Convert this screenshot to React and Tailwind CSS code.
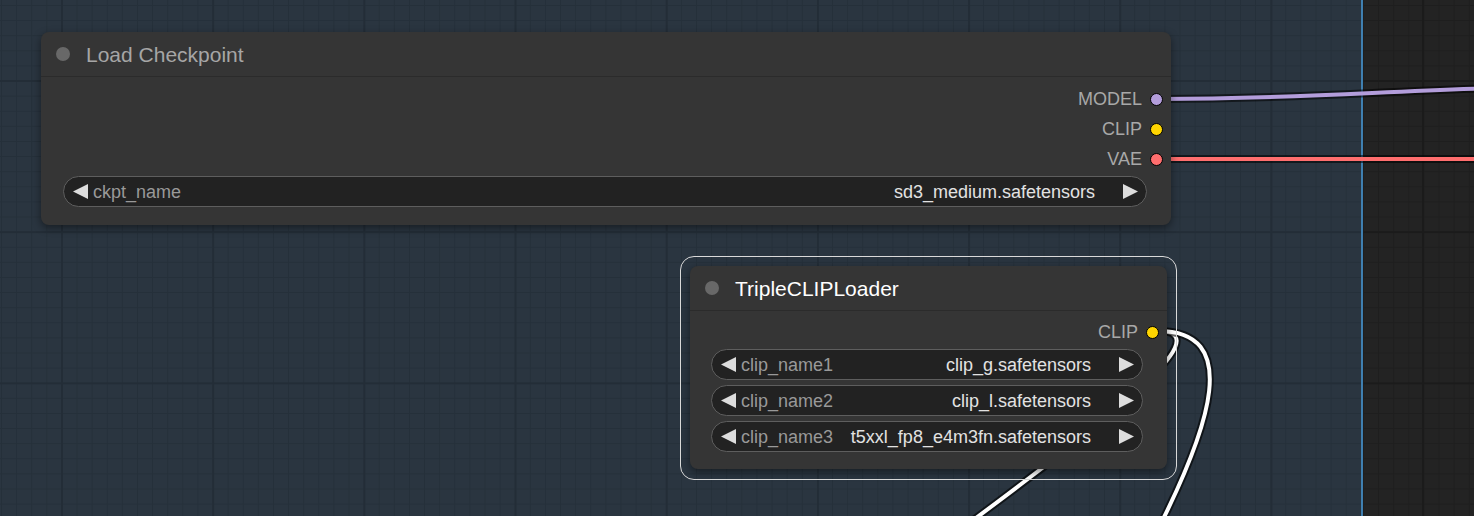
import React from "react";

const font = "font-['Liberation_Sans',Arial,sans-serif]";

function ArrowLeft() {
  return (
    <svg width="15" height="15" viewBox="0 0 15 15" className="shrink-0">
      <polygon points="0,7.5 15,0 15,15" fill="#dddddd" />
    </svg>
  );
}

function ArrowRight() {
  return (
    <svg width="15" height="15" viewBox="0 0 15 15" className="shrink-0">
      <polygon points="15,7.5 0,0 0,15" fill="#dddddd" />
    </svg>
  );
}

function Output({ label, color }) {
  return (
    <div className="h-[30px] flex items-center justify-end gap-[8px] pr-[8px]">
      <span className="text-[18px] text-[#a8a8a8] leading-[22px]">{label}</span>
      <span className={`w-[13px] h-[13px] rounded-full border border-black ${color}`} />
    </div>
  );
}

function Combo({ name, value }) {
  return (
    <div className="h-[31px] rounded-full border border-[#5e5e5e] bg-[#222222] flex items-center pl-[9px] pr-[8px]">
      <ArrowLeft />
      <span className="ml-[5px] text-[18px] text-[#999999] leading-[22px] whitespace-nowrap">{name}</span>
      <span className="flex-1 text-right text-[18px] text-[#e2e2e2] leading-[22px] whitespace-nowrap">{value}</span>
      <span className="ml-[28px]"><ArrowRight /></span>
    </div>
  );
}

function Title({ text, selected }) {
  return (
    <div className="h-[45px] flex items-center pl-[15px] gap-[16px] border-b border-[#2b2b2b]">
      <span className="w-[14px] h-[14px] rounded-full bg-[#686868]" />
      <span className={`text-[21px] leading-none ${selected ? "text-white" : "text-[#a6a6a6]"}`}>{text}</span>
    </div>
  );
}

export default function App() {
  return (
    <div
      className={`relative w-[1474px] h-[516px] overflow-hidden bg-[#2a3540] ${font} [background-image:linear-gradient(to_right,#232d37_2px,transparent_2px),linear-gradient(to_bottom,#232d37_2px,transparent_2px),linear-gradient(to_right,#25303a_1px,transparent_1px),linear-gradient(to_bottom,#25303a_1px,transparent_1px)] [background-size:151.2px_151.2px,151.2px_151.2px,15.12px_15.12px,15.12px_15.12px] [background-position:61px_80px,61px_80px,1px_5px,1px_5px]`}
    >
      {/* dark area on the right */}
      <div className="absolute left-[1361px] top-0 bottom-0 right-0 border-l-2 border-[#3f7fb0] bg-[#232323] [background-image:linear-gradient(to_right,#1b1b1b_2px,transparent_2px),linear-gradient(to_bottom,#1b1b1b_2px,transparent_2px),linear-gradient(to_right,#1e1e1e_1px,transparent_1px),linear-gradient(to_bottom,#1e1e1e_1px,transparent_1px)] [background-size:151.2px_151.2px,151.2px_151.2px,15.12px_15.12px,15.12px_15.12px] [background-position:59px_80px,59px_80px,0px_5px,0px_5px]" />

      {/* links */}
      <svg className="absolute inset-0" width="1474" height="516" viewBox="0 0 1474 516" fill="none">
        <g strokeLinecap="round">
          <path d="M1160 99 C1300 99 1380 91 1500 88" stroke="rgba(0,0,0,0.55)" strokeWidth="8" />
          <path d="M1160 99 C1300 99 1380 91 1500 88" stroke="#b39ddb" strokeWidth="4" />
          <path d="M1160 159 L1500 159" stroke="rgba(0,0,0,0.55)" strokeWidth="8" />
          <path d="M1160 159 L1500 159" stroke="#ff6e6e" strokeWidth="4" />
          <path d="M1158 331 C1230 331 1080 440 940 545" stroke="rgba(0,0,0,0.6)" strokeWidth="8" />
          <path d="M1158 331 C1230 331 1080 440 940 545" stroke="#ffffff" strokeWidth="4" />
          <path d="M1158 331 C1240 331 1215 420 1150 545" stroke="rgba(0,0,0,0.6)" strokeWidth="8" />
          <path d="M1158 331 C1240 331 1215 420 1150 545" stroke="#ffffff" strokeWidth="4" />
        </g>
      </svg>

      {/* Load Checkpoint */}
      <div className="absolute left-[41px] top-[32px] w-[1130px] h-[193px] rounded-[8px] bg-[#353535] shadow-[0_3px_8px_rgba(0,0,0,0.45)]">
        <Title text="Load Checkpoint" />
        <div className="pt-[7px]">
          <Output label="MODEL" color="bg-[#b39ddb]" />
          <Output label="CLIP" color="bg-[#ffd500]" />
          <Output label="VAE" color="bg-[#ff6e6e]" />
          <div className="mt-[2px] ml-[22px] mr-[24px]">
            <Combo name="ckpt_name" value="sd3_medium.safetensors" />
          </div>
        </div>
      </div>

      {/* TripleCLIPLoader (selected) */}
      <div className="absolute left-[680px] top-[256px] w-[497px] h-[224px] rounded-[14px] border border-[#dadada] p-[9px]">
        <div className="w-[477px] h-[203px] rounded-[8px] bg-[#353535] shadow-[0_3px_8px_rgba(0,0,0,0.45)]">
          <Title text="TripleCLIPLoader" selected />
          <div className="pt-[6px]">
            <Output label="CLIP" color="bg-[#ffd500]" />
            <div className="mt-[2px] ml-[21px] mr-[24px] flex flex-col gap-[5px]">
              <Combo name="clip_name1" value="clip_g.safetensors" />
              <Combo name="clip_name2" value="clip_l.safetensors" />
              <Combo name="clip_name3" value="t5xxl_fp8_e4m3fn.safetensors" />
            </div>
          </div>
        </div>
      </div>
    </div>
  );
}
